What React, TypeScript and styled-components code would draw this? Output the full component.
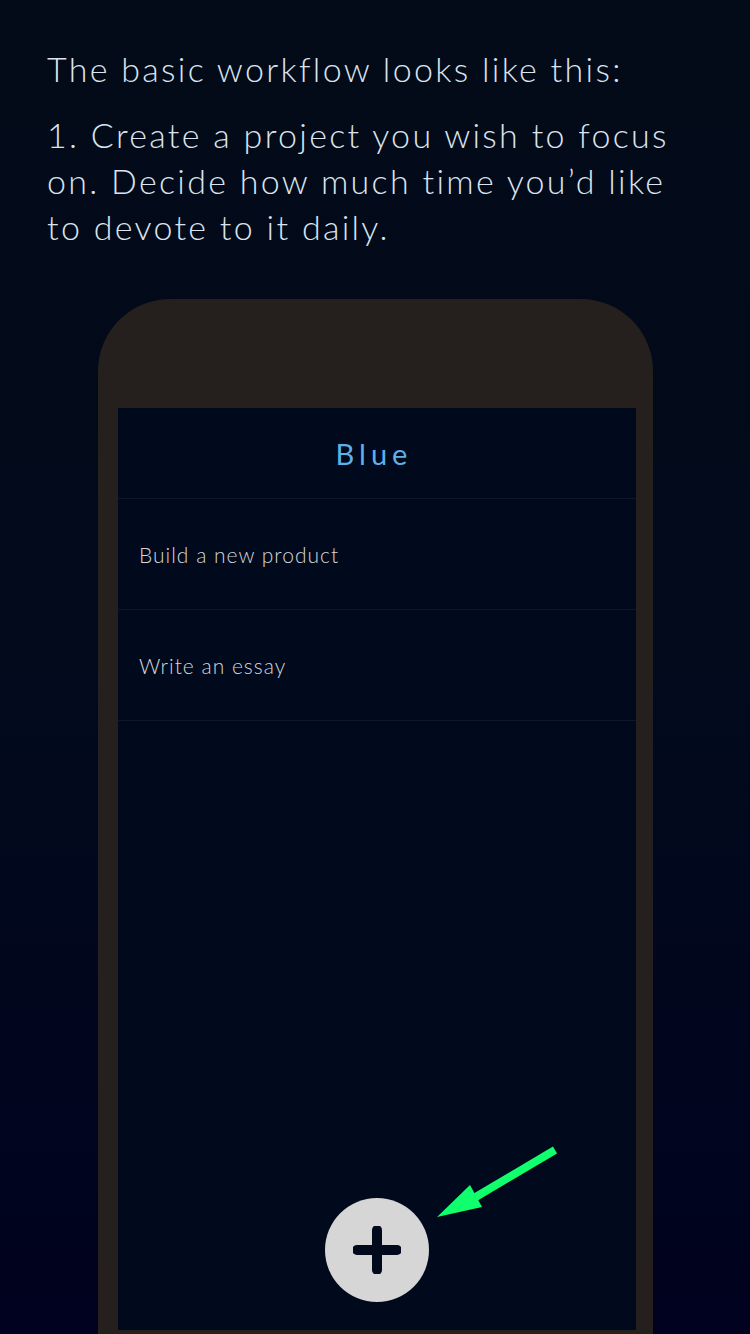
import React from "react";
import styled, { createGlobalStyle } from "styled-components";

const Global = createGlobalStyle`
  html, body { margin: 0; padding: 0; }
  body { background: #02081a; }
`;

const Page = styled.div`
  width: 750px;
  height: 1334px;
  overflow: hidden;
  box-sizing: border-box;
  background: linear-gradient(180deg, #030a18 0%, #020a1c 50%, #00021f 100%);
  font-family: Lato, "Noto Sans", sans-serif;
  display: flex;
  flex-direction: column;
`;

const Intro = styled.div`
  padding: 46px 60px 0 47px;
  color: #dbe4ee;
  font-weight: 300;
  font-size: 34px;
  letter-spacing: 2.3px;
  line-height: 46px;
`;

const Para = styled.p<{ $gap?: number }>`
  margin: 0 0 ${(p) => p.$gap ?? 0}px;
`;

const Phone = styled.div`
  margin: 49px 0 0 98px;
  width: 555px;
  flex: 1;
  box-sizing: border-box;
  background: #25201e;
  border-radius: 72px 72px 0 0;
  padding: 109px 17px 4px 20px;
  display: flex;
`;

const Screen = styled.div`
  position: relative;
  flex: 1;
  background: #000a1c;
  display: flex;
  flex-direction: column;
`;

const Header = styled.div`
  height: 90px;
  display: flex;
  align-items: center;
  justify-content: center;
  color: #5eb0e6;
  font-size: 29px;
  font-weight: 400;
  letter-spacing: 5px;
  padding-right: 6px;
  border-bottom: 1.5px solid #0e1727;
`;

const Row = styled.div`
  height: 110px;
  display: flex;
  align-items: center;
  padding-left: 21px;
  color: #d4d6da;
  font-size: 21px;
  font-weight: 300;
  letter-spacing: 1px;
  border-bottom: 1.5px solid #0e1727;
`;

const FabArea = styled.div`
  margin-top: auto;
  display: flex;
  justify-content: center;
  padding-bottom: 28px;
`;

const Fab = styled.button`
  width: 104px;
  height: 104px;
  border-radius: 50%;
  border: none;
  background: #d6d6d6;
  display: flex;
  align-items: center;
  justify-content: center;
  padding: 0;
`;

const Arrow = styled.svg`
  position: absolute;
  left: 312px;
  top: 732px;
  width: 135px;
  height: 85px;
`;

export default function App() {
  return (
    <Page>
      <Global />
      <Intro>
        <Para $gap={20}>The basic workflow looks like this:</Para>
        <Para>
          1. Create a project you wish to focus on. Decide how much time you’d like to devote to it daily.
        </Para>
      </Intro>
      <Phone>
        <Screen>
          <Header>Blue</Header>
          <Row>Build a new product</Row>
          <Row>Write an essay</Row>
          <FabArea>
            <Fab aria-label="Add project">
              <svg width="48" height="48" viewBox="0 0 48 48">
                <path d="M24 4 V44 M4 24 H44" stroke="#000a1c" strokeWidth="10" strokeLinecap="round" />
              </svg>
            </Fab>
          </FabArea>
          <Arrow viewBox="0 0 135 85">
            <line x1="125" y1="10" x2="44" y2="58" stroke="#10ff6c" strokeWidth="8" />
            <polygon points="7,77 40,45 52,67" fill="#10ff6c" />
          </Arrow>
        </Screen>
      </Phone>
    </Page>
  );
}
